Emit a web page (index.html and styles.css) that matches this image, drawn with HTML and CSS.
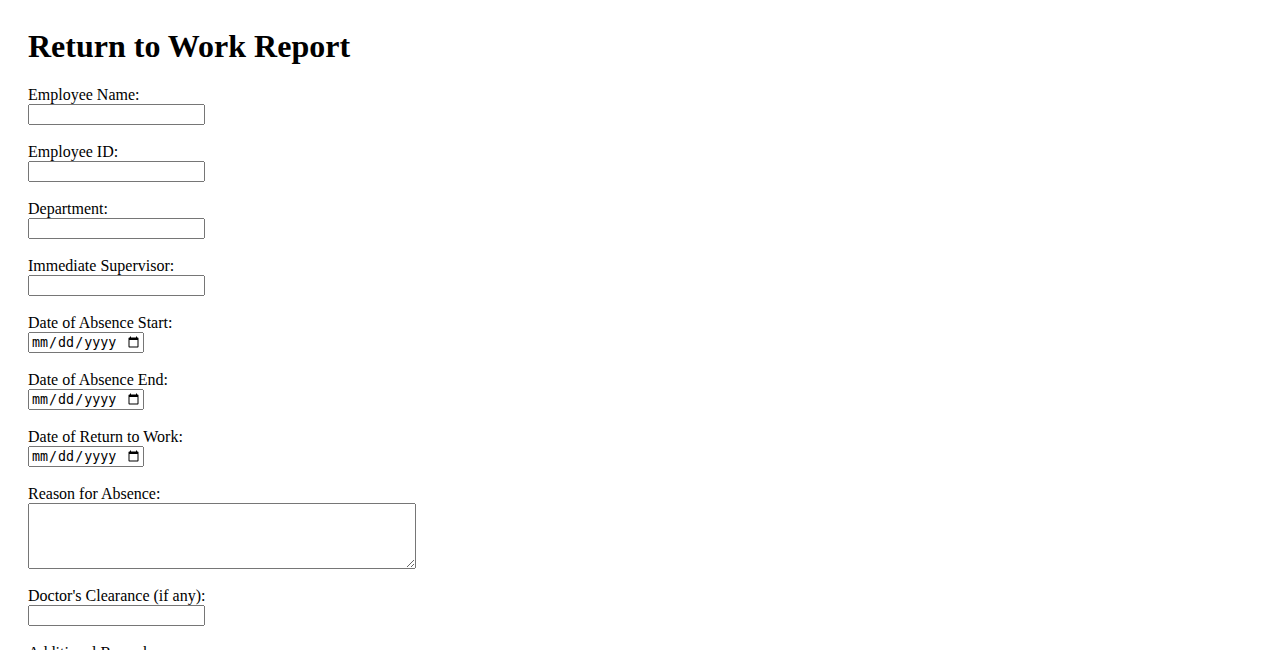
FILE: index.html
```html
<!DOCTYPE html>
<html>
<head>
<meta charset="utf-8">
<title>Return to Work Report</title>
<link rel="stylesheet" href="styles.css">
</head>
<body>
<div class="page">
<h1 class="title">Return to Work Report</h1>
<form class="form">
<label for="name">Employee Name:</label><br>
<input class="text" type="text" id="name"><br><br>
<label for="eid">Employee ID:</label><br>
<input class="text" type="text" id="eid"><br><br>
<label for="dept">Department:</label><br>
<input class="text" type="text" id="dept"><br><br>
<label for="sup">Immediate Supervisor:</label><br>
<input class="text" type="text" id="sup"><br><br>
<label for="ds">Date of Absence Start:</label><br>
<input class="date" type="date" id="ds"><br><br>
<label for="de">Date of Absence End:</label><br>
<input class="date" type="date" id="de"><br><br>
<label for="dr">Date of Return to Work:</label><br>
<input class="date" type="date" id="dr"><br><br>
<label for="reason">Reason for Absence:</label><br>
<textarea class="area" id="reason" rows="4" cols="50"></textarea><br><br>
<label for="doc">Doctor's Clearance (if any):</label><br>
<input class="text" type="text" id="doc"><br><br>
<label for="rem">Additional Remarks:</label><br>
<textarea class="area" id="rem" rows="4" cols="50"></textarea><br><br>
<input type="submit" value="Submit">
</form>
</div>
</body>
</html>
```
FILE: styles.css
```css
body {
  margin: 8px;
  font-family: "Liberation Serif", "Times New Roman", serif;
  font-size: 16px;
  color: #000;
  background: #fff;
}
.page {
  padding: 20px;
}
.title {
  margin: 0 0 21px;
  font-size: 32px;
  font-weight: bold;
}
.text {
  width: 177px;
  height: 21px;
  box-sizing: border-box;
}
.date {
  width: 116px;
  height: 21px;
  box-sizing: border-box;
}
.area {
  width: 388px;
  height: 66px;
  box-sizing: border-box;
  vertical-align: top;
}
```
